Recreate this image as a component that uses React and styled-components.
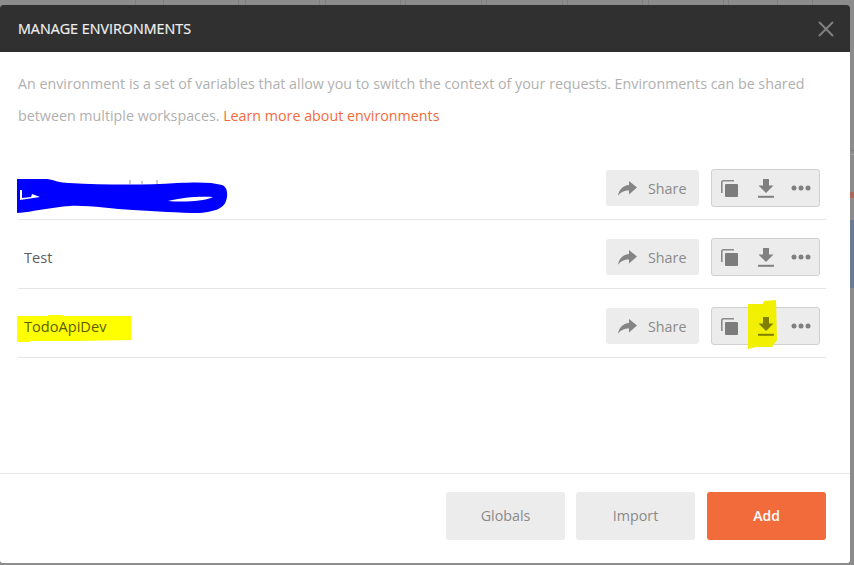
import React from "react";
import styled, { createGlobalStyle } from "styled-components";

const Global = createGlobalStyle`
  html, body { margin: 0; padding: 0; width: 854px; height: 565px; overflow: hidden; background: #8c8c8c; }
  * { box-sizing: border-box; }
`;

const Backdrop = styled.div`
  position: relative;
  width: 854px;
  height: 565px;
  padding-top: 5px;
  background: #8c8c8c;
  font-family: "Open Sans", sans-serif;
`;

const TopTick = styled.span`
  position: absolute;
  top: 0;
  left: ${(p) => p.$x}px;
  width: 1px;
  height: 5px;
  background: #7f7f7f;
`;

const SideBand = styled.span`
  position: absolute;
  left: 850px;
  width: 4px;
  top: ${(p) => p.$top}px;
  height: ${(p) => p.$h}px;
  background: ${(p) => p.$color};
`;

const Modal = styled.div`
  position: relative;
  width: 850px;
  height: 558px;
  background: #fff;
  border-radius: 3px;
  display: flex;
  flex-direction: column;
  overflow: hidden;
`;

const Header = styled.header`
  height: 47px;
  flex: none;
  background: #303030;
  display: flex;
  align-items: center;
  justify-content: space-between;
  padding: 0 16px 0 18px;
`;

const Title = styled.h1`
  margin: 0;
  font-size: 14.3px;
  font-weight: 400;
  color: #f0f0f0;
  -webkit-text-stroke: 0.2px #f0f0f0;
`;

const Close = styled.svg`
  width: 16px;
  height: 16px;
  display: block;
`;

const Body = styled.div`
  flex: 1;
  padding: 16px 24px 0 18px;
  display: flex;
  flex-direction: column;
`;

const Intro = styled.p`
  margin: 0 0 19px;
  font-size: 14.27px;
  line-height: 32px;
  color: #b0b0b0;
  white-space: pre-line;
`;

const Link = styled.a`
  color: #f26b3a;
`;

const List = styled.div`
  display: flex;
  flex-direction: column;
`;

const Row = styled.div`
  position: relative;
  height: 69px;
  border-bottom: 1px solid #e6e6e6;
  display: flex;
  align-items: center;
  padding: 6px 6px 0 6px;
`;

const Name = styled.span`
  position: relative;
  font-size: 14.6px;
  color: ${(p) => (p.$marked ? "#5c5c00" : "#606060")};
`;

const Highlight = styled.svg`
  position: absolute;
  left: -7px;
  top: -1px;
  width: 114px;
  height: 27px;
`;

const NameText = styled.span`
  position: relative;
`;

const Scribble = styled.svg`
  position: absolute;
  left: -1px;
  top: 25px;
  width: 230px;
  height: 38px;
`;

const Actions = styled.div`
  margin-left: auto;
  display: flex;
  align-items: center;
  gap: 12px;
`;

const ShareButton = styled.button`
  width: 93px;
  height: 36px;
  border: 0;
  border-radius: 3px;
  background: #ececec;
  color: #8a8a8a;
  font: 400 14.3px "Open Sans", sans-serif;
  display: flex;
  align-items: center;
  gap: 11px;
  padding: 0 0 0 12px;
`;

const Group = styled.div`
  width: 109px;
  height: 38px;
  border: 1px solid #d0d0d0;
  border-radius: 3px;
  background: #ececec;
  display: flex;
  align-items: center;
`;

const IconSlot = styled.span`
  position: relative;
  width: ${(p) => p.$w}px;
  height: 100%;
  display: flex;
  align-items: center;
  justify-content: center;
  flex: none;
`;

const Marker = styled.svg`
  position: absolute;
  left: 1px;
  top: -8px;
  width: 29px;
  height: 49px;
`;

const IconSvg = styled.svg`
  position: relative;
  display: block;
`;

const Footer = styled.footer`
  height: 90px;
  flex: none;
  border-top: 1px solid #e6e6e6;
  display: flex;
  justify-content: flex-end;
  align-items: flex-start;
  gap: 11px;
  padding: 18px 24px 0 0;
`;

const FootButton = styled.button`
  width: 119px;
  height: 48px;
  border: 0;
  border-radius: 3px;
  padding: 0 0 2px;
  margin-left: ${(p) => (p.$primary ? 1 : 0)}px;
  font: ${(p) => (p.$primary ? "600 14px" : "400 14.3px")} "Open Sans", sans-serif;
  background: ${(p) => (p.$primary ? "#f26b3a" : "#ececec")};
  color: ${(p) => (p.$primary ? "#fff" : "#8a8a8a")};
`;

const ShareIcon = () => (
  <IconSvg width="19" height="15" viewBox="0 0 19 15">
    <path d="M11 0 L19 6.5 L11 13.5 V9.5 C6 9.5 3 11 0 14.8 C1 8.5 5 4.5 11 4 Z" fill="#858585" />
  </IconSvg>
);

const CopyIcon = () => (
  <IconSvg width="17" height="17" viewBox="0 0 17 17">
    <path d="M.8 13 V2.5 Q.8 .8 2.5 .8 H13" fill="none" stroke="#8a8a8a" strokeWidth="1.6" />
    <rect x="4" y="4" width="13" height="13" rx="1" fill="#7c7c7c" />
  </IconSvg>
);

const DownloadIcon = ({ color }) => (
  <IconSvg width="16" height="19" viewBox="0 0 16 19">
    <path d="M5 0 H11 V6.5 H15.5 L8 14 L.5 6.5 H5 Z" fill={color} />
    <rect x="0" y="16.8" width="16" height="2" fill={color} />
  </IconSvg>
);

const DotsIcon = () => (
  <IconSvg width="20" height="6" viewBox="0 0 20 6">
    <circle cx="3" cy="3" r="2.5" fill="#808080" />
    <circle cx="10" cy="3" r="2.5" fill="#808080" />
    <circle cx="17" cy="3" r="2.5" fill="#808080" />
  </IconSvg>
);

const rows = [
  { name: "", scribble: true },
  { name: "Test" },
  { name: "TodoApiDev", marked: true },
];

const ticks = [135, 163, 238, 245, 319, 325, 400, 405, 481, 486, 562, 567, 642, 648, 723, 728, 777, 812];

export default function App() {
  return (
    <Backdrop>
      <Global />
      {ticks.map((x) => (
        <TopTick key={x} $x={x} />
      ))}
      <SideBand $top={150} $h={1} $color="#7a7a7a" />
      <SideBand $top={154} $h={1} $color="#a0a0a0" />
      <SideBand $top={192} $h={6} $color="#a66a58" />
      <SideBand $top={220} $h={68} $color="#6c7b95" />
      <Modal>
        <Header>
          <Title>MANAGE ENVIRONMENTS</Title>
          <Close viewBox="0 0 16 16">
            <path d="M1 1 L15 15 M15 1 L1 15" stroke="#808080" strokeWidth="2" />
          </Close>
        </Header>
        <Body>
          <Intro>
            An environment is a set of variables that allow you to switch the context of your requests. Environments can be shared{"\n"}
            between multiple workspaces. <Link>Learn more about environments</Link>
          </Intro>
          <List>
            {rows.map((r, i) => (
              <Row key={i}>
                {r.scribble ? (
                  <Scribble viewBox="0 0 230 38">
                    <path d="M113 4 V8 M140 4 V8 M125 5 V8" stroke="#999" strokeWidth="1" />
                    <path
                      d="M0 3 H30 C38 4 42 7 52 7 C90 9 130 9 160 7 C180 6 195 6 205 9 C211 11 211 20 209 25 C207 33 195 36 183 37 C160 37 140 35 116 34 C95 33 70 29 53 30 C35 31 15 36 0 37 Z"
                      fill="#0000ff"
                    />
                    <path d="M151 25 C165 21 185 20 196 21 C185 26 165 26 151 25 Z" fill="#fff" />
                    <path d="M3 14 V24 L23 21 L15 18 L14 21 L5 22 V14 Z" fill="#fff" />
                  </Scribble>
                ) : (
                  <Name $marked={r.marked}>
                    {r.marked && (
                      <Highlight viewBox="0 0 114 27">
                        <path d="M0 1 H30 L32 0 H45 L47 1 H114 V25 L60 26 H14 L12 27 H0 Z" fill="#ffff00" />
                      </Highlight>
                    )}
                    <NameText>{r.name}</NameText>
                  </Name>
                )}
                <Actions>
                  <ShareButton>
                    <ShareIcon />
                    Share
                  </ShareButton>
                  <Group>
                    <IconSlot $w={35}><CopyIcon /></IconSlot>
                    <IconSlot $w={38}>
                      {r.marked && (
                        <Marker viewBox="0 0 29 49">
                          <path d="M0 4 H15 L16 1 L28 0 L29 40 L24 47 L8 47 L0 49 Z" fill="#f0f000" />
                        </Marker>
                      )}
                      <DownloadIcon color={r.marked ? "#808000" : "#808080"} />
                    </IconSlot>
                    <IconSlot $w={31}><DotsIcon /></IconSlot>
                  </Group>
                </Actions>
              </Row>
            ))}
          </List>
        </Body>
        <Footer>
          <FootButton>Globals</FootButton>
          <FootButton>Import</FootButton>
          <FootButton $primary>Add</FootButton>
        </Footer>
      </Modal>
    </Backdrop>
  );
}
